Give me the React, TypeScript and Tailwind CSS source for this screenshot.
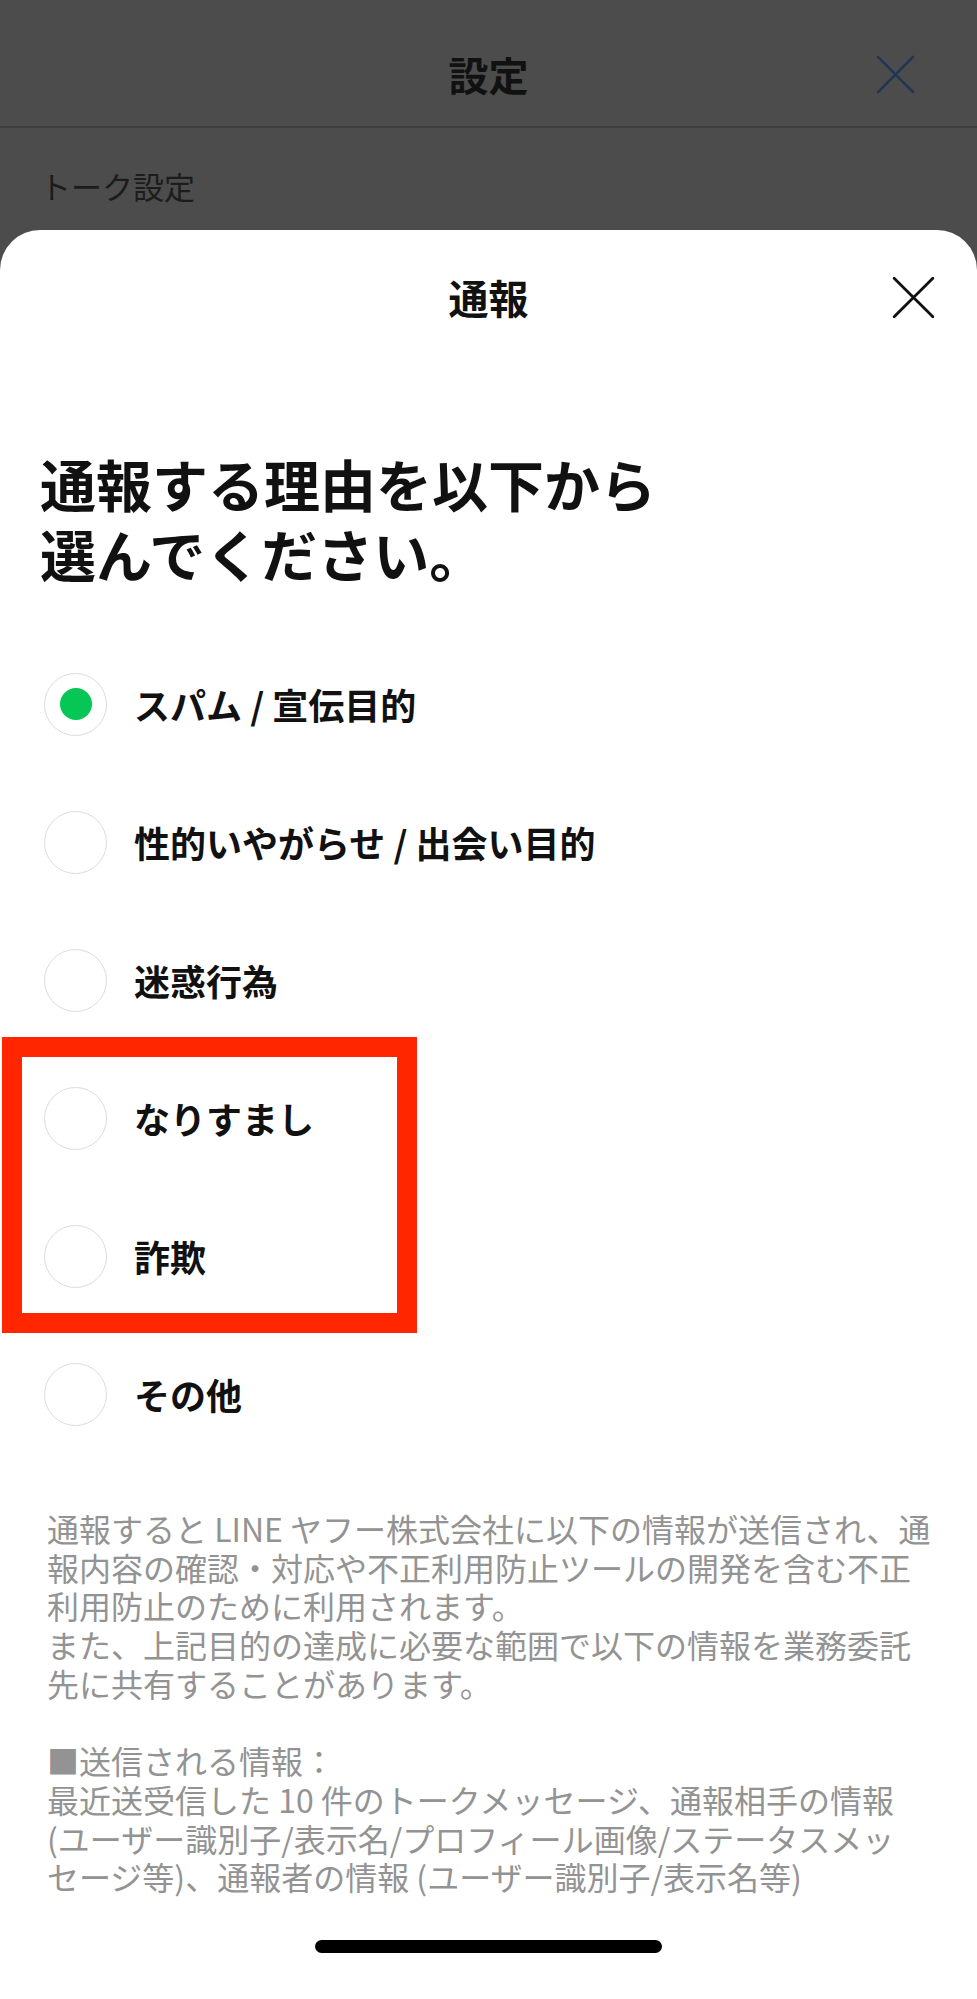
const REASONS = [
  "スパム / 宣伝目的",
  "性的いやがらせ / 出会い目的",
  "迷惑行為",
  "なりすまし",
  "詐欺",
  "その他",
];

const NOTICE_LINES = [
  "通報すると LINE ヤフー株式会社に以下の情報が送信され、通",
  "報内容の確認・対応や不正利用防止ツールの開発を含む不正",
  "利用防止のために利用されます。",
  "また、上記目的の達成に必要な範囲で以下の情報を業務委託",
  "先に共有することがあります。",
  "",
  "■送信される情報：",
  "最近送受信した 10 件のトークメッセージ、通報相手の情報",
  "(ユーザー識別子/表示名/プロフィール画像/ステータスメッ",
  "セージ等)、通報者の情報 (ユーザー識別子/表示名等)",
];

function CloseIcon({ className }: { className?: string }) {
  return (
    <svg viewBox="0 0 40 40" className={className} fill="none" stroke="currentColor" strokeWidth={2.6} strokeLinecap="round">
      <path d="M2 2 L38 38 M38 2 L2 38" />
    </svg>
  );
}

function Radio({ checked }: { checked: boolean }) {
  return (
    <span className="flex h-[63px] w-[63px] shrink-0 items-center justify-center rounded-full border-[1.5px] border-[#dcdcdc] bg-white">
      {checked && <span className="h-[32px] w-[32px] rounded-full bg-[#06c755]" />}
    </span>
  );
}

export default function App() {
  return (
    <div
      className="flex min-h-[1999px] w-full flex-col bg-[#4c4c4c]"
      style={{ fontFamily: '"Noto Sans CJK JP", "Noto Sans", sans-serif' }}
    >
      {/* dimmed settings screen behind the sheet */}
      <header className="grid h-[128px] grid-cols-[1fr_auto_1fr] items-center border-b-2 border-[#3e3e3e] pt-[22px]">
        <div />
        <h1 className="text-[40px] font-bold text-[#111]">設定</h1>
        <div className="flex justify-end pr-[62px]">
          <CloseIcon className="h-[39px] w-[39px] text-[#1f3653]" />
        </div>
      </header>
      <div className="flex h-[102px] items-center pl-[40px] pt-[14px]">
        <p className="text-[31px] text-[#1c1c1c]">トーク設定</p>
      </div>

      {/* report sheet */}
      <section className="flex flex-1 flex-col rounded-t-[40px] bg-white">
        <div className="grid h-[134px] grid-cols-[1fr_auto_1fr] items-center">
          <div />
          <h2 className="text-[40px] font-semibold text-[#111]">通報</h2>
          <div className="flex justify-end pr-[42px]">
            <CloseIcon className="h-[43px] w-[43px] text-[#111]" />
          </div>
        </div>

        <h3 className="mt-[84px] pl-[40px] text-[56px] font-bold leading-[70px] text-[#111]">
          通報する理由を以下から
          <br />
          選んでください。
        </h3>

        <div className="relative mt-[47px]">
          {REASONS.map((r, i) => (
            <div key={r} className="flex h-[138px] items-center gap-[27px] pl-[44px]">
              <Radio checked={i === 0} />
              <span className="text-[36px] font-bold text-[#111]">{r}</span>
            </div>
          ))}
          {/* annotation highlight */}
          <div className="pointer-events-none absolute left-[2px] top-[402px] h-[296px] w-[415px] border-[20px] border-[#ff2600]" />
        </div>

        <div className="mt-[46px] pl-[47px] text-[32px] leading-[38.7px] text-[#939393]">
          {NOTICE_LINES.map((l, i) => (
            <p key={i} className="whitespace-nowrap">
              {l || "\u00a0"}
            </p>
          ))}
        </div>

        <div className="mt-auto flex justify-center pb-[46px]">
          <span className="h-[13px] w-[347px] rounded-full bg-black" />
        </div>
      </section>
    </div>
  );
}
